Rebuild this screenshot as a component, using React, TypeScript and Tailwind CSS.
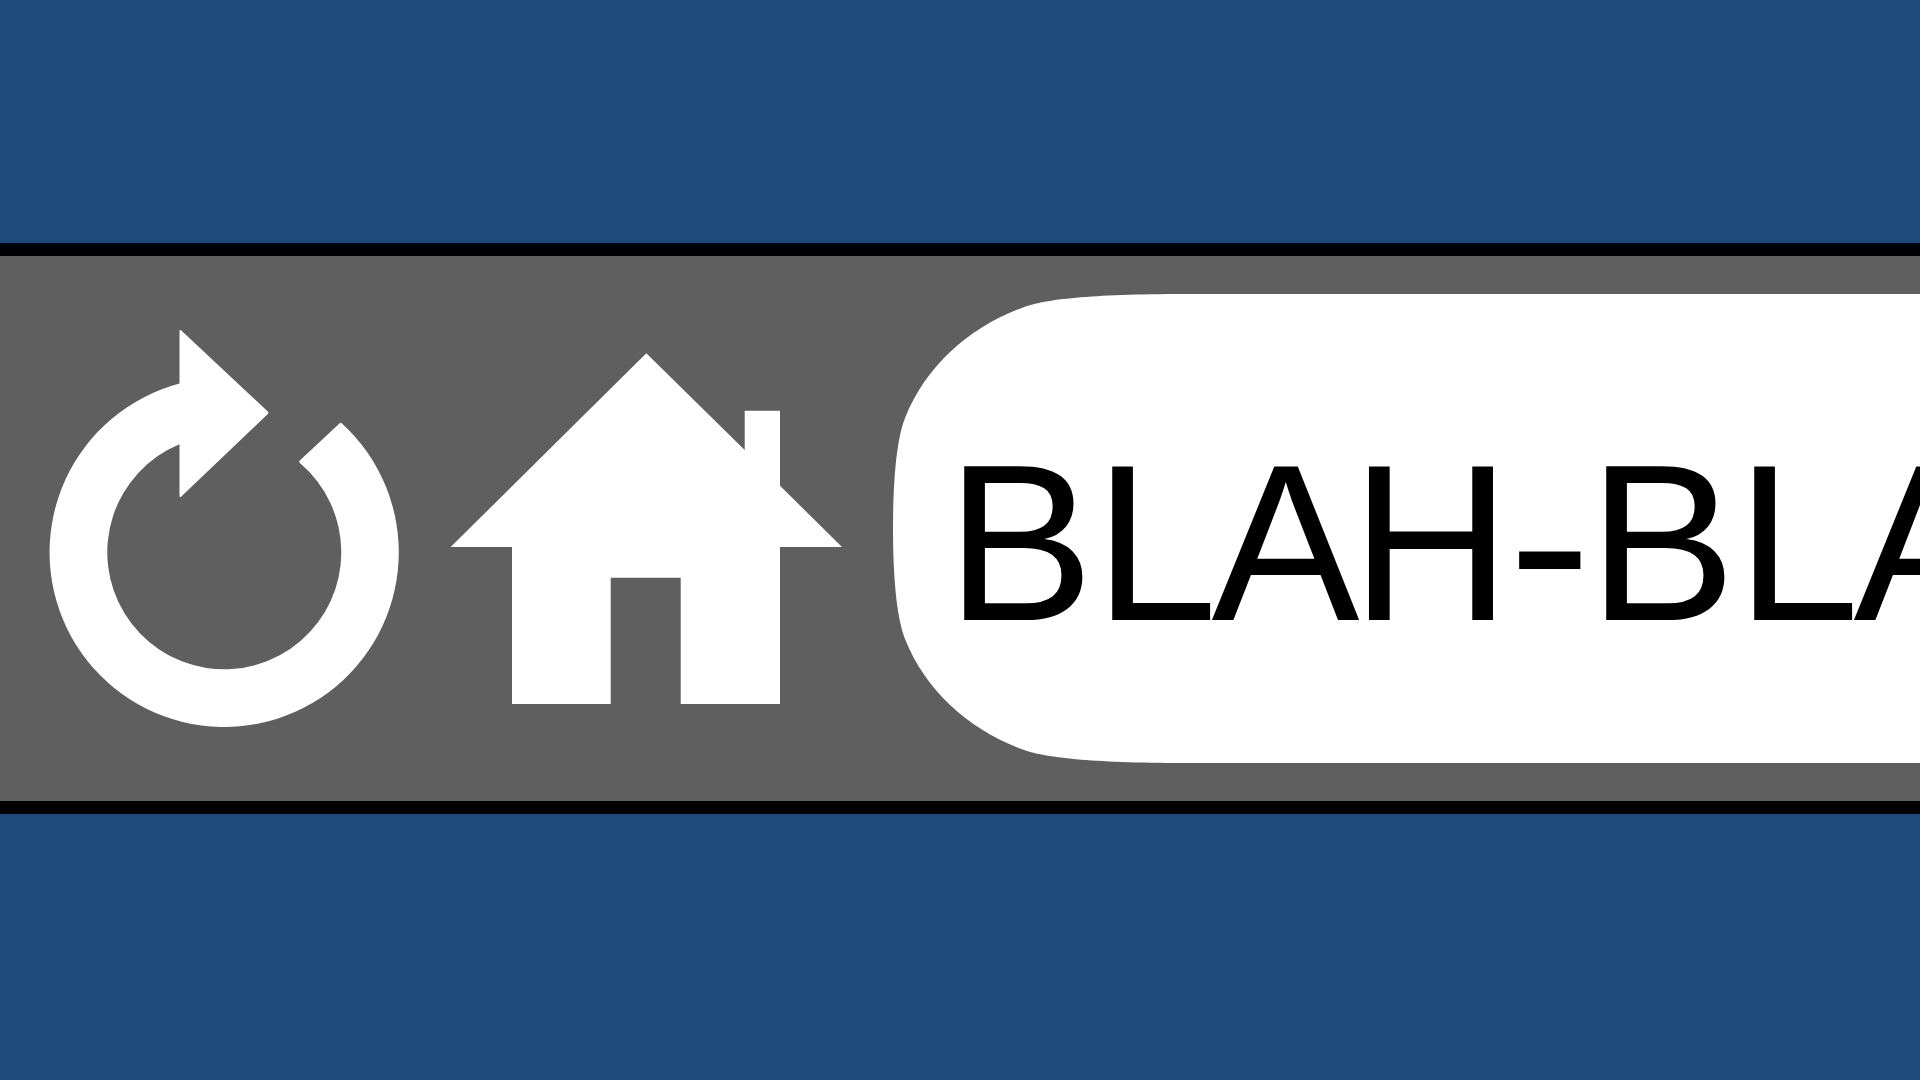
const letters: [string, string][] = [
  ["B", "tracking-[0px]"],
  ["L", "tracking-[-6px]"],
  ["A", "tracking-[-9px]"],
  ["H", "tracking-[-3px]"],
];

function Blah() {
  return (
    <>
      {letters.map(([c, t], i) => (
        <span key={i} className={t}>{c}</span>
      ))}
    </>
  );
}

function Hyphen() {
  return <span className="inline-block origin-left scale-x-[1.13] tracking-[6px]">-</span>;
}

export default function App() {
  return (
    <div className="flex h-[1080px] w-[1920px] flex-col overflow-hidden bg-[#1d4a7a]">
      <div className="h-[243px] shrink-0" />
      <div className="flex h-[571px] shrink-0 items-start overflow-hidden border-y-[13px] border-black bg-[#5f5f5f] py-[38px] pl-[48px]">
        <svg className="mt-[35px] h-[399px] w-[353px] shrink-0" viewBox="48 329 353 399" fill="#fff">
          <path d="M179.5 383.55A174.6 174.6 0 1 0 342 423.5Q341 422 339.7 423.2L299.8 460.6Q298.4 462 299.9 463A117 117 0 1 1 179.5 444.2L179.5 495.5Q179.5 498 181.3 496.4L267.8 414Q269 412.7 267.8 411.4L181.3 330.6Q179.5 329 179.5 331.3Z" />
        </svg>
        <svg className="ml-[49px] mt-[59px] h-[352px] w-[393px] shrink-0" viewBox="450 353 393 352" fill="#fff">
          <path d="M646.3 353.3L744.7 450V410.7H780V485.7L842 547H780V704H680.7V577.7H610.7V704H512V547H450.7Z" />
        </svg>
        <div className="ml-[50px] flex h-[469px] w-[1400px] shrink-0 items-center bg-white pl-[53px] [clip-path:path('M0_234.5C0_190_3_147_12_124C33_71_78.4_31.5_132_12.7C152_5.7_195_0_292_0L1400_0L1400_469L292_469C195_469_152_463.3_132_456.3C78.4_437.5_33_398_12_345C3_322_0_279_0_234.5Z')]">
          <span className="mt-[28px] whitespace-nowrap font-['Liberation_Sans',sans-serif] text-[222px] leading-none text-black">
            <Blah /><Hyphen /><Blah /><Hyphen />
            <span>B</span><span className="tracking-[-6px]">L</span><span>A</span>
          </span>
        </div>
      </div>
      <div className="flex-1" />
    </div>
  );
}
